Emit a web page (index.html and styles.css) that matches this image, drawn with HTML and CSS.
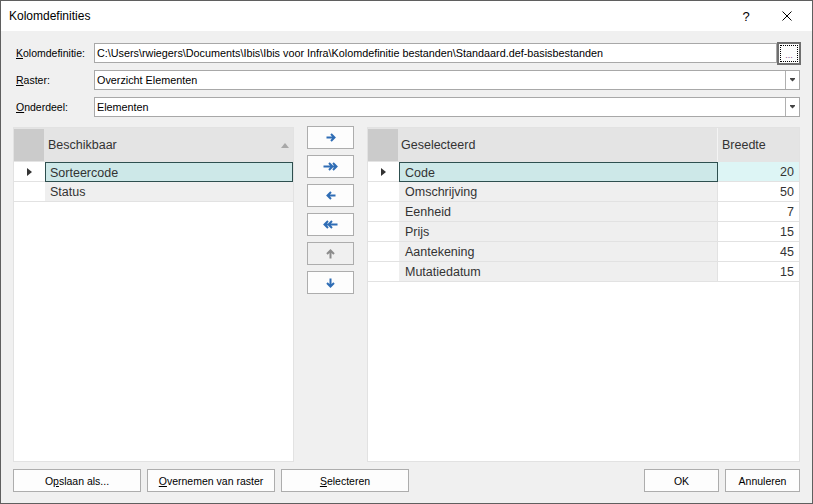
FILE: index.html
```html
<!DOCTYPE html>
<html>
<head>
<meta charset="utf-8">
<link rel="stylesheet" href="styles.css">
</head>
<body>
<div class="window">
  <div class="titlebar">
    <span class="title">Kolomdefinities</span>
    <span class="help">?</span>
    <span class="close"><svg width="10" height="10" viewBox="0 0 10 10"><path d="M0.5 0.5 L9.5 9.5 M9.5 0.5 L0.5 9.5" stroke="#000" stroke-width="1" fill="none"/></svg></span>
  </div>
  <div class="content">
    <div class="form">
      <div class="row">
        <span class="lbl"><u>K</u>olomdefinitie:</span>
        <div class="field">C:\Users\rwiegers\Documents\Ibis\Ibis voor Infra\Kolomdefinitie bestanden\Standaard.def-basisbestanden</div>
        <div class="ellipsis"><span class="focus">...</span></div>
      </div>
      <div class="row">
        <span class="lbl"><u>R</u>aster:</span>
        <div class="field combo"><span class="val">Overzicht Elementen</span><span class="drop"><svg width="5" height="4" viewBox="0 0 5 4"><rect x="0" y="0" width="5" height="1" fill="#444"/><polygon points="0,1 5,1 2.5,3.6" fill="#444"/></svg></span></div>
      </div>
      <div class="row">
        <span class="lbl"><u>O</u>nderdeel:</span>
        <div class="field combo"><span class="val">Elementen</span><span class="drop"><svg width="5" height="4" viewBox="0 0 5 4"><rect x="0" y="0" width="5" height="1" fill="#444"/><polygon points="0,1 5,1 2.5,3.6" fill="#444"/></svg></span></div>
      </div>
    </div>

    <div class="main">
      <div class="grid grid-left">
        <div class="ghead">
          <div class="ind corner"></div>
          <div class="hcell hfill">Beschikbaar<svg class="sort" width="8" height="5" viewBox="0 0 8 5"><polygon points="0,5 8,5 4,0" fill="#a8a8a8"/></svg></div>
        </div>
        <div class="grow">
          <div class="ind"><svg width="5" height="8" viewBox="0 0 5 8"><polygon points="0,0 5,4 0,8" fill="#333"/></svg></div>
          <div class="cell fill sel">Sorteercode</div>
        </div>
        <div class="grow">
          <div class="ind"></div>
          <div class="cell fill">Status</div>
        </div>
      </div>

      <div class="mid">
        <div class="mbtn"><svg width="10" height="9" viewBox="0 0 10 9"><path d="M0.5 4.5 H8.5 M5 1 L8.5 4.5 L5 8" stroke="#2f6db5" stroke-width="2" fill="none"/></svg></div>
        <div class="mbtn"><svg width="15" height="9" viewBox="0 0 15 9"><path d="M0.5 4.5 H13.5 M6 1 L9.5 4.5 L6 8 M10 1 L13.5 4.5 L10 8" stroke="#2f6db5" stroke-width="2" fill="none"/></svg></div>
        <div class="mbtn"><svg width="10" height="9" viewBox="0 0 10 9"><path d="M9.5 4.5 H1.5 M5 1 L1.5 4.5 L5 8" stroke="#2f6db5" stroke-width="2" fill="none"/></svg></div>
        <div class="mbtn"><svg width="15" height="9" viewBox="0 0 15 9"><path d="M14.5 4.5 H1.5 M9 1 L5.5 4.5 L9 8 M5 1 L1.5 4.5 L5 8" stroke="#2f6db5" stroke-width="2" fill="none"/></svg></div>
        <div class="mbtn disabled"><svg width="9" height="10" viewBox="0 0 9 10"><path d="M4.5 9.5 V1.5 M1 5 L4.5 1.5 L8 5" stroke="#8c8c8c" stroke-width="2" fill="none"/></svg></div>
        <div class="mbtn"><svg width="9" height="10" viewBox="0 0 9 10"><path d="M4.5 0.5 V8.5 M1 5 L4.5 8.5 L8 5" stroke="#2f6db5" stroke-width="2" fill="none"/></svg></div>
      </div>

      <div class="grid grid-right">
        <div class="ghead">
          <div class="ind corner"></div>
          <div class="hcell hname">Geselecteerd</div>
          <div class="hcell hnum">Breedte</div>
        </div>
        <div class="grow">
          <div class="ind"><svg width="5" height="8" viewBox="0 0 5 8"><polygon points="0,0 5,4 0,8" fill="#333"/></svg></div>
          <div class="cell name sel">Code</div>
          <div class="cell num selrow">20</div>
        </div>
        <div class="grow"><div class="ind"></div><div class="cell name">Omschrijving</div><div class="cell num">50</div></div>
        <div class="grow"><div class="ind"></div><div class="cell name">Eenheid</div><div class="cell num">7</div></div>
        <div class="grow"><div class="ind"></div><div class="cell name">Prijs</div><div class="cell num">15</div></div>
        <div class="grow"><div class="ind"></div><div class="cell name">Aantekening</div><div class="cell num">45</div></div>
        <div class="grow"><div class="ind"></div><div class="cell name">Mutatiedatum</div><div class="cell num">15</div></div>
      </div>
    </div>

    <div class="footer">
      <div class="btn wide">O<u>p</u>slaan als...</div>
      <div class="btn wide"><u>O</u>vernemen van raster</div>
      <div class="btn wide"><u>S</u>electeren</div>
      <div class="spacer"></div>
      <div class="btn small">OK</div>
      <div class="btn small">Annuleren</div>
    </div>
  </div>
</div>
</body>
</html>
```
FILE: styles.css
```css
* { box-sizing: border-box; }
html, body { margin: 0; padding: 0; }
body {
  font-family: "Liberation Sans", Arial, sans-serif;
  background: #fff;
}
.window {
  width: 813px;
  height: 504px;
  border: 1px solid #5f5f5f;
  display: flex;
  flex-direction: column;
  background: #f0f0f0;
}
.titlebar {
  height: 30px;
  flex: 0 0 30px;
  background: #fff;
  display: flex;
  align-items: center;
  padding-left: 8px;
  padding-right: 20px;
  font-size: 12px;
  color: #000;
}
.title { flex: 1; }
.help { width: 12px; text-align: center; font-size: 13px; margin-right: 30px; }
.close { width: 10px; height: 10px; display: flex; }

.content {
  flex: 1;
  display: flex;
  flex-direction: column;
  padding: 12px 12px 11px 12px;
  font-size: 10.5px;
  color: #000;
}
.form { display: flex; flex-direction: column; gap: 7px; }
.row { display: flex; height: 20px; align-items: center; }
.lbl { width: 81px; flex: 0 0 81px; padding-left: 3px; }
.field {
  flex: 1;
  height: 20px;
  border: 1px solid #a8a8a8;
  background: #fff;
  padding-left: 2px;
  line-height: 18px;
  font-size: 10.8px;
  white-space: nowrap;
  overflow: hidden;
}
.ellipsis {
  width: 24px;
  height: 23px;
  flex: 0 0 24px;
  margin: -1px -1px -2px 0;
  border: 2px solid #6f6f6f;
  background: #fdfdfd;
  padding: 1px;
}
.focus {
  display: block;
  height: 100%;
  border: 1px dotted #000;
  text-align: center;
  font-size: 9px;
  line-height: 19px;
  color: #8a4a8a;
}
.combo { display: flex; padding-right: 0; }
.val { flex: 1; }
.drop {
  width: 14px;
  border-left: 1px solid #b0b0b0;
  display: flex;
  align-items: center;
  justify-content: center;
}

.main {
  flex: 1;
  display: flex;
  margin-top: 10px;
  min-height: 0;
}
.grid {
  background: #fff;
  border: 1px solid #e2e2e2;
  display: flex;
  flex-direction: column;
  font-size: 12.5px;
  color: #333;
}
.grid-left { flex: 0 0 281px; }
.grid-right { flex: 1; }
.mid {
  flex: 0 0 73px;
  display: flex;
  flex-direction: column;
  align-items: center;
  gap: 6px;
  margin-top: -1px;
}
.mbtn {
  width: 47px;
  height: 23px;
  border: 1px solid #adadad;
  background: #fdfdfd;
  display: flex;
  align-items: center;
  justify-content: center;
}
.mbtn.disabled { background: #f0f0f0; }

.ghead {
  display: flex;
  height: 34px;
  background: #e4e4e4;
}
.ind {
  flex: 0 0 31px;
  width: 31px;
  display: flex;
  align-items: center;
  justify-content: center;
}
.corner { background: #cbcbcb; border: 1px solid #e4e4e4; border-left: 0; }
.hcell {
  display: flex;
  align-items: center;
  padding-left: 3px;
}
.hfill { flex: 1; justify-content: space-between; padding-right: 4px; }
.hname { flex: 0 0 319px; padding-left: 2px; border-right: 1px solid #f4f4f4; }
.hnum { flex: 1; padding-left: 4px; }

.grow {
  display: flex;
  height: 20px;
  border-bottom: 1px solid #e2e2e2;
}
.grow .ind { background: #fff; }
.cell {
  display: flex;
  align-items: center;
  background: #efefef;
  padding-left: 5px;
  padding-top: 1px;
  border-right: 1px solid #e2e2e2;
}
.fill { flex: 1; border-right: 0; }
.name { flex: 0 0 319px; padding-left: 6px; }
.num {
  flex: 1;
  background: #fff;
  justify-content: flex-end;
  padding-right: 5px;
  border-right: 0;
}
.sel {
  background: #cde8e8;
  border: 1px solid #2e4f4f;
  margin-bottom: -1px;
  padding-left: 4px;
}
.name.sel { padding-left: 5px; }
.selrow { background: #ddf5f5; }

.footer {
  display: flex;
  gap: 6px;
  margin-top: 7px;
  height: 23px;
}
.spacer { flex: 1; }
.btn {
  height: 23px;
  border: 1px solid #adadad;
  background: #fdfdfd;
  display: flex;
  align-items: center;
  justify-content: center;
}
.wide { width: 128px; }
.small { width: 75px; }
```
